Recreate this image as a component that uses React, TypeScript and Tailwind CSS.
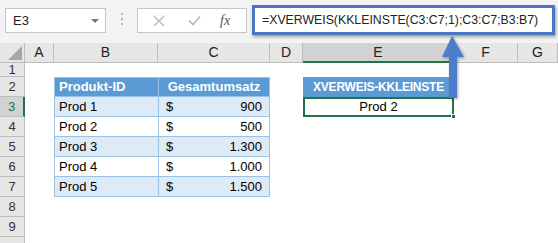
import React from "react";

const FONT = { fontFamily: '"Liberation Sans", Arial, sans-serif' };

const COLS = ["A", "B", "C", "D", "E", "F", "G"];

type Row = { n: number; h: string; b?: string; c?: string; alt?: boolean; head?: boolean; hideNum?: boolean };

const ROWS: Row[] = [
  { n: 1, h: "h-[14px]" },
  { n: 2, h: "h-[20px]", head: true },
  { n: 3, h: "h-[20px]", b: "Prod 1", c: "900", alt: true },
  { n: 4, h: "h-[20px]", b: "Prod 2", c: "500" },
  { n: 5, h: "h-[20px]", b: "Prod 3", c: "1.300", alt: true },
  { n: 6, h: "h-[20px]", b: "Prod 4", c: "1.000" },
  { n: 7, h: "h-[20px]", b: "Prod 5", c: "1.500", alt: true },
  { n: 8, h: "h-[20px]" },
  { n: 9, h: "h-[20px]" },
  // row 10 only peeks in at the bottom edge
  { n: 10, h: "h-[20px]", hideNum: true },
];

function Toolbar() {
  return (
    <div className="h-[43px] bg-[#f3f3f3] flex items-start pl-[5px]">
      <div className="mt-[8px] w-[101px] h-[25px] bg-white border border-[#c6c6c6] flex items-center justify-between pl-[7px] pr-[6px] text-[13px] text-[#222]">
        <span>E3</span>
        <span className="w-0 h-0 border-l-[4px] border-r-[4px] border-t-[4px] border-l-transparent border-r-transparent border-t-[#777]" />
      </div>
      <div className="mt-[13px] ml-[15px] flex flex-col gap-[3px]">
        <span className="w-[2px] h-[2px] bg-[#b4b4b4]" />
        <span className="w-[2px] h-[2px] bg-[#b4b4b4]" />
        <span className="w-[2px] h-[2px] bg-[#b4b4b4]" />
      </div>
      <div className="mt-[8px] ml-[14px] w-[110px] h-[25px] bg-white border border-[#c6c6c6] flex items-center">
        <svg width="12" height="12" viewBox="0 0 12 12" className="ml-[15px]">
          <path d="M1 1L11 11M11 1L1 11" stroke="#b8b8b8" strokeWidth="1.3" />
        </svg>
        <svg width="13" height="11" viewBox="0 0 13 11" className="ml-[23px]">
          <path d="M1 5.5L5 9.5L12 1.5" stroke="#b8b8b8" strokeWidth="1.6" fill="none" />
        </svg>
        <span
          className="ml-[19px] italic text-[14px] text-[#555]"
          style={{ fontFamily: '"Liberation Serif", "Times New Roman", serif' }}
        >
          fx
        </span>
      </div>
      <div className="ml-[5px] mt-[5px] w-[303px] h-[30px] bg-white border-[3px] border-[#4a76c6] shadow-[1px_2px_3px_rgba(0,0,0,0.35)] flex items-center pl-[7px] text-[12.3px] text-[#222]">
        =XVERWEIS(KKLEINSTE(C3:C7;1);C3:C7;B3:B7)
      </div>
    </div>
  );
}

function Sheet() {
  return (
    <div className="grid grid-cols-[25px_29px_104px_112px_33px_151px_64px_1fr] text-[13px] text-black">
      {/* select-all corner */}
      <div className="h-[20px] bg-[#e6e6e6] border-r border-b border-[#bdbdbd] flex items-end justify-end pr-[2px] pb-[2px]">
        <svg width="14" height="14" viewBox="0 0 14 14" className="block shrink-0">
          <polygon points="14,0 14,14 0,14" fill="#a6a6a6" />
        </svg>
      </div>
      {COLS.map((c) => (
        <div
          key={c}
          className={
            c === "E"
              ? "h-[20px] bg-[#d2d2d2] border-r border-[#bdbdbd] border-b-2 border-b-[#217346] flex items-center justify-center text-[14px] text-[#222]"
              : "h-[20px] bg-[#e6e6e6] border-r border-b border-[#bdbdbd] flex items-center justify-center text-[14px] text-[#222]"
          }
        >
          {c}
        </div>
      ))}

      {ROWS.map((r) => (
        <React.Fragment key={r.n}>
          <div
            className={
              r.n === 3
                ? `${r.h} bg-[#d2d2d2] border-b border-[#bdbdbd] border-r-2 border-r-[#217346] flex items-center justify-center text-[#217346]`
                : `${r.h} bg-[#e6e6e6] border-b border-r border-[#bdbdbd] flex items-center justify-center text-[#333]`
            }
          >
            {r.hideNum ? "" : r.n}
          </div>
          <div className={r.h} />
          {r.head ? (
            <>
              <div className="h-[20px] bg-[#5b9bd5] border border-r-0 border-[#9bc2e6] flex items-center pl-[4px] font-bold text-white">
                Produkt-ID
              </div>
              <div className="h-[20px] bg-[#5b9bd5] border border-[#9bc2e6] flex items-center justify-center font-bold text-white">
                Gesamtumsatz
              </div>
            </>
          ) : r.b ? (
            <>
              <div
                className={`h-[20px] ${r.alt ? "bg-[#ddebf7]" : "bg-white"} border-l border-b border-[#9bc2e6] flex items-center pl-[4px]`}
              >
                {r.b}
              </div>
              <div
                className={`h-[20px] ${r.alt ? "bg-[#ddebf7]" : "bg-white"} border-l border-r border-b border-[#9bc2e6] flex items-center justify-between pl-[7px] pr-[7px]`}
              >
                <span>$</span>
                <span>{r.c}</span>
              </div>
            </>
          ) : (
            <>
              <div className={r.h} />
              <div className={r.h} />
            </>
          )}
          <div className={r.h} />
          {r.n === 2 ? (
            <div className="h-[20px] bg-[#5b9bd5] flex items-center justify-center font-bold text-white text-[12px] tracking-[-0.02em]">
              XVERWEIS-KKLEINSTE
            </div>
          ) : r.n === 3 ? (
            <div className="h-[20px] bg-white border-2 border-[#217346] flex items-center justify-center relative">
              Prod 2
              <span className="absolute right-[-4px] bottom-[-4px] w-[5px] h-[5px] bg-[#217346] border border-white" />
            </div>
          ) : (
            <div className={r.h} />
          )}
          <div className={r.h} />
          <div className={r.h} />
        </React.Fragment>
      ))}
    </div>
  );
}

export default function App() {
  return (
    <div className="w-[558px] h-[243px] overflow-hidden bg-white relative" style={FONT}>
      <Toolbar />
      <Sheet />
      {/* arrow from the result cell up to the formula bar */}
      <svg
        className="absolute left-[438px] top-[33px]"
        width="32"
        height="70"
        viewBox="0 0 32 70"
        style={{ filter: "drop-shadow(1px 1px 1.5px rgba(0,0,0,0.35))" }}
      >
        <path d="M14 3L4 24H11V65H19V24H26Z" fill="#4d7ccb" />
      </svg>
    </div>
  );
}
